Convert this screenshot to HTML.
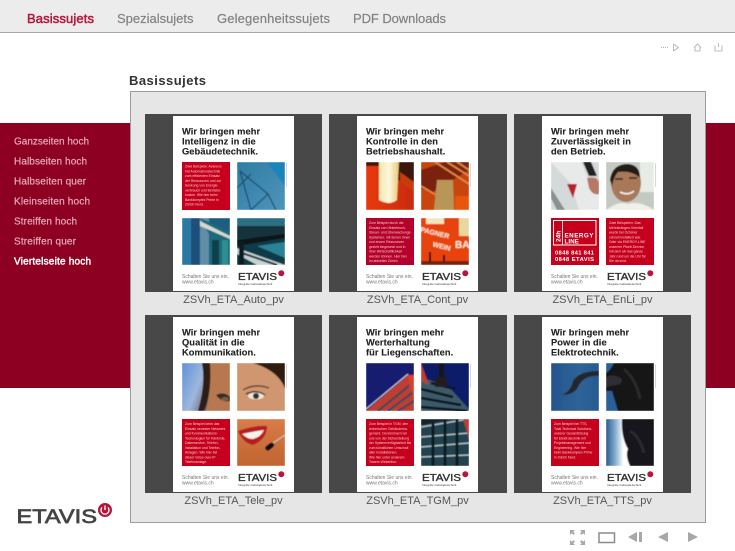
<!DOCTYPE html>
<html><head><meta charset="utf-8"><title>Basissujets</title>
<style>
html,body{margin:0;padding:0;background:#fff;width:735px;height:551px;overflow:hidden}
svg{display:block}
text{font-family:"Liberation Sans",sans-serif}
.h{font-size:9.3px;font-weight:bold;fill:#222;letter-spacing:.08px;stroke:#222;stroke-width:.12}
.r{font-size:3.4px;fill:#f6c8c8}
.f{font-size:5px;fill:#777}
.l{font-size:9.7px;fill:#333;stroke:#333;stroke-width:.35}
.t{font-size:3px;fill:#444}
.c{font-size:11px;fill:#555;text-anchor:middle}
.m{font-size:10px;fill:#e0a4b4;stroke:#e0a4b4;stroke-width:.25}
.n{font-size:13px;fill:#808080;stroke:#808080;stroke-width:.18}
</style></head><body>
<svg width="735" height="551" viewBox="0 0 735 551" xmlns="http://www.w3.org/2000/svg">
<defs>
<filter id="b" x="-5%" y="-5%" width="110%" height="110%"><feGaussianBlur stdDeviation=".45"/></filter>
<linearGradient id="g1" x1="0" y1="0" x2="1" y2="1"><stop offset="0" stop-color="#2f7ca4"/><stop offset="1" stop-color="#4f94ba"/></linearGradient>
<linearGradient id="g2" x1="0" y1="0" x2="1" y2="0"><stop offset="0" stop-color="#e83a10"/><stop offset="1" stop-color="#c82a08"/></linearGradient>
<linearGradient id="g3" x1="0" y1="0" x2="1" y2="0"><stop offset="0" stop-color="#f0e6b0"/><stop offset=".5" stop-color="#fff8dc"/><stop offset="1" stop-color="#e8c878"/></linearGradient>
<linearGradient id="g4" x1="0" y1="0" x2="1" y2=".4"><stop offset="0" stop-color="#5f90d8"/><stop offset=".45" stop-color="#9db8dc"/><stop offset="1" stop-color="#3a2a20"/></linearGradient>
<linearGradient id="g5" x1="0" y1="0" x2="1" y2="0"><stop offset="0" stop-color="#24548c"/><stop offset=".6" stop-color="#2e6498"/><stop offset="1" stop-color="#245a90"/></linearGradient>
<linearGradient id="g6" x1="0" y1="0" x2="1" y2="0"><stop offset="0" stop-color="#2a5a90"/><stop offset=".2" stop-color="#8ab0d0"/><stop offset=".36" stop-color="#fff"/></linearGradient>
<linearGradient id="g7" x1="0" y1="0" x2="0" y2="1"><stop offset="0" stop-color="#d87c48"/><stop offset="1" stop-color="#c06430"/></linearGradient>
</defs>

<!-- header -->
<rect x="0" y="0" width="735" height="32" fill="#ececec"/>
<rect x="0" y="32" width="735" height="1" fill="#a8a8a8"/>
<text x="27" y="23" font-size="13" fill="#b5173d" stroke="#b5173d" stroke-width=".5" textLength="67">Basissujets</text>
<text class="n" x="117" y="23" textLength="76.5">Spezialsujets</text>
<text class="n" x="217" y="23" textLength="113">Gelegenheitssujets</text>
<text class="n" x="353" y="23" textLength="93">PDF Downloads</text>

<!-- top icons -->
<g fill="none" stroke="#a8aeae" stroke-width=".8">
<path d="M661 47.5h1M663 47.5h1M665 47.5h1M667 47.5h1" stroke="#999"/>
<path d="M673.5 44v7M673.5 44l5 3.5-5 3.5"/>
<path d="M694 47.5l3.5-3.5 3.5 3.5M695 47v4h5v-4"/>
<path d="M715 45.5v5.500h7v-5.500M718.500 43v4"/>
</g>

<!-- red band -->
<rect x="0" y="123" width="735" height="265" fill="#8e0022"/>
<text class="m" x="14" y="144.500" textLength="75">Ganzseiten hoch</text>
<text class="m" x="14" y="164.500" textLength="73">Halbseiten hoch</text>
<text class="m" x="14" y="184.500" textLength="72">Halbseiten quer</text>
<text class="m" x="14" y="204.500" textLength="76">Kleinseiten hoch</text>
<text class="m" x="14" y="224.500" textLength="63">Streiffen hoch</text>
<text class="m" x="14" y="244.500" textLength="62">Streiffen quer</text>
<text class="m" x="14" y="264.500" textLength="77" style="fill:#fff;stroke:#fff;stroke-width:.45">Viertelseite hoch</text>

<!-- title and panel -->
<text x="129" y="85" font-size="13" font-weight="bold" fill="#333" textLength="77">Basissujets</text>
<rect x="130.500" y="91.500" width="575" height="431" fill="#e6e6e6" stroke="#9c9c9c"/>

<!-- CARD 1 -->
<g transform="translate(145,114)">
<rect width="177" height="178" fill="#484848"/><rect x="28" y="2" width="121" height="175" fill="#fff"/>
<text class="h" x="37" y="20.500">Wir bringen mehr</text><text class="h" x="37" y="30.500">Intelligenz in die</text><text class="h" x="37" y="40.500">Gebäudetechnik.</text>
<rect x="37" y="48" width="48" height="48" fill="#c6001c"/>
<text class="r"><tspan x="40" y="53.500">Zwei Beispiele: Avanexo</tspan><tspan x="40" y="58.300">hat Automationstechnik</tspan><tspan x="40" y="63">zum effizienten Einsatz</tspan><tspan x="40" y="67.800">der Ressourcen und zur</tspan><tspan x="40" y="72.500">Senkung von Energie-</tspan><tspan x="40" y="77.300">verbrauch und Betriebs-</tspan><tspan x="40" y="82">kosten. Wie hier beim</tspan><tspan x="40" y="86.800">Bankkomplex Prime in</tspan><tspan x="40" y="91.500">Zürich Nord.</tspan></text>
<svg x="92" y="48" width="48" height="48" viewBox="0 0 48 48"><g filter="url(#b)"><rect width="48" height="48" fill="url(#g1)"/><path d="M3 9L31 32 39 48M3 9L14 48M31 32L14 48M0 26L14 12" stroke="#1d4a68" stroke-width="1.200" fill="none"/><path d="M30 0L48 24V0Z" fill="#1d84bb"/></g></svg>
<svg x="37" y="104" width="48" height="47" viewBox="0 0 48 47"><g filter="url(#b)"><rect width="48" height="47" fill="#1f5d80"/><rect x="0" width="9" height="47" fill="#2c78a4"/><rect x="9" width="9" height="47" fill="#1a4f7a"/><rect x="18" width="9" height="47" fill="#5e8ea6"/><path d="M18 0L48 14V47H28V18Z" fill="#1d6a7a"/><path d="M18 3L48 18 48 21 18 8Z" fill="#d8d8d0"/><rect x="30" y="22" width="7" height="25" fill="#0f3f4a"/><rect x="40" y="22" width="6" height="25" fill="#2f8f90"/></g></svg>
<svg x="92" y="104" width="48" height="47" viewBox="0 0 48 47"><g filter="url(#b)"><rect width="48" height="47" fill="#103a46"/><rect width="48" height="20" fill="#17303a"/><path d="M0 0H48V8H0Z" fill="#2a7082"/><path d="M0 22L48 16V20L0 28Z" fill="#0a1418"/><path d="M0 30L48 47H20L0 36Z" fill="#c8d4d4"/><path d="M2 34L40 47" stroke="#153038" stroke-width="2"/><rect x="2" y="24" width="5" height="23" fill="#0a1a20"/><path d="M20 28L48 24V40Z" fill="#2c8296"/></g></svg>
<rect x="141" y="49" width="1" height="24" fill="#d8d8d8"/>
<text class="f" x="37" y="164">Schalten Sie uns ein.</text><text class="f" x="37" y="169.500">www.etavis.ch</text>
<text class="l" x="93" y="166" textLength="39" lengthAdjust="spacingAndGlyphs">ETAVIS</text><circle cx="136.300" cy="159.300" r="3" fill="#b5173d"/><text class="t" x="93" y="171">Integrale Gebäudetechnik</text>
<text class="c" x="88.500" y="189">ZSVh_ETA_Auto_pv</text>
</g>

<!-- CARD 2 -->
<g transform="translate(329,114)">
<rect width="178" height="178" fill="#484848"/><rect x="28" y="2" width="121" height="175" fill="#fff"/>
<text class="h" x="37" y="20.500">Wir bringen mehr</text><text class="h" x="37" y="30.500">Kontrolle in den</text><text class="h" x="37" y="40.500">Betriebshaushalt.</text>
<svg x="37" y="48" width="48" height="48" viewBox="0 0 48 48"><g filter="url(#b)"><rect width="48" height="48" fill="url(#g2)"/><path d="M30 0H48V30L30 16Z" fill="#3a1208"/><path d="M34 10L48 20V30L34 20Z" fill="#c83a10"/><path d="M0 0H14V4H0Z" fill="#401408"/><path d="M13 0H33L31 38Q23 44 13 38Z" fill="url(#g3)"/></g></svg>
<svg x="92" y="48" width="48" height="48" viewBox="0 0 48 48"><g filter="url(#b)"><rect width="48" height="48" fill="#c84410"/><path d="M0 8L24 0H48V8L12 30 0 26Z" fill="#7a2408"/><path d="M14 0L48 22M26 0L48 14M36 0L48 8M0 24L30 42" stroke="#e08a48" stroke-width="1.800" fill="none"/><path d="M13 48L16 18H32L33 48Z" fill="#b89658"/><path d="M34 48H48V34H34Z" fill="#e8540c"/></g></svg>
<rect x="37" y="104" width="48" height="47" fill="#b4002a"/>
<text class="r"><tspan x="40" y="110">Zum Beispiel durch die</tspan><tspan x="40" y="114.800">Einsatz von Hinterleuch-</tspan><tspan x="40" y="119.500">Steuer- und Überwachungs-</tspan><tspan x="40" y="124.300">Systemen, mit denen Innen</tspan><tspan x="40" y="129">und enorm Ressourcen</tspan><tspan x="40" y="133.800">gezielt eingesetzt und in</tspan><tspan x="40" y="138.500">ihrer Wirtschaftlichkeit</tspan><tspan x="40" y="143.300">werden können. Hier hier</tspan><tspan x="40" y="148">im aktuellen Zürich.</tspan></text>
<svg x="92" y="104" width="48" height="47" viewBox="0 0 48 47"><g filter="url(#b)"><rect width="48" height="47" fill="#e8420e"/><rect x="5" y="0" width="18" height="6" fill="#f0e6c0"/><rect x="38" y="0" width="10" height="18" fill="#e8d8a0"/><text transform="rotate(14 1 10)" x="0" y="14" font-size="7" font-weight="bold" fill="#fff2d8">PAGNER</text><text transform="rotate(14 10 25)" x="12" y="28" font-size="7" font-weight="bold" fill="#fff2d8">WEIN</text><text x="34" y="30" font-size="10" font-weight="bold" fill="#fff2d8">BA</text><rect x="0" y="43" width="48" height="4" fill="#7a2208"/><rect x="8" y="34" width="2" height="10" fill="#301008"/><rect x="22" y="37" width="2" height="7" fill="#301008"/></g></svg>
<rect x="141" y="49" width="1" height="24" fill="#d8d8d8"/>
<text class="f" x="37" y="164">Schalten Sie uns ein.</text><text class="f" x="37" y="169.500">www.etavis.ch</text>
<text class="l" x="93" y="166" textLength="39" lengthAdjust="spacingAndGlyphs">ETAVIS</text><circle cx="136.300" cy="159.300" r="3" fill="#b5173d"/><text class="t" x="93" y="171">Integrale Gebäudetechnik</text>
<text class="c" x="88.500" y="189">ZSVh_ETA_Cont_pv</text>
</g>

<!-- CARD 3 -->
<g transform="translate(514,114)">
<rect width="177" height="178" fill="#484848"/><rect x="28" y="2" width="121" height="175" fill="#fff"/>
<text class="h" x="37" y="20.500">Wir bringen mehr</text><text class="h" x="37" y="30.500">Zuverlässigkeit in</text><text class="h" x="37" y="40.500">den Betrieb.</text>
<svg x="37" y="48" width="48" height="48" viewBox="0 0 48 48"><g filter="url(#b)"><rect width="48" height="48" fill="#d4d9d9"/><path d="M0 0H30L40 24H48V48H28L20 22Z" fill="#e8eaea"/><path d="M32 0H40L46 14H38Z" fill="#222"/><path d="M0 26L14 48H6L0 36Z" fill="#8a9090"/><path d="M16 22H26L22 36Z" fill="#b8202c"/><path d="M36 16Q46 14 48 20V32Q42 34 38 26Z" fill="#b87868"/></g></svg>
<svg x="92" y="48" width="48" height="48" viewBox="0 0 48 48"><g filter="url(#b)"><rect width="48" height="48" fill="#c4c9c2"/><rect x="34" y="0" width="14" height="30" fill="#e8ece6"/><ellipse cx="20" cy="21" rx="15" ry="19" fill="#a87858"/><path d="M4 18Q6 2 22 2 34 3 34 16 26 8 12 10 8 14 6 24Z" fill="#201c18"/><path d="M9 17h8M23 16h8" stroke="#2c2018" stroke-width="1.600"/><path d="M14 30q8 4 14-1" stroke="#f4f0e8" stroke-width="1.600" fill="none"/><path d="M0 48Q14 38 22 42 34 38 48 48Z" fill="#f0efe8"/></g></svg>
<rect x="37" y="104" width="48" height="47" fill="#c6001c"/>
<path d="M39.500 106.500H82V131H39.500Z" fill="none" stroke="#fff" stroke-width="1"/>
<rect x="48" y="107" width=".8" height="24" fill="#fff"/>
<text x="46.500" y="128" transform="rotate(-90 46.500 128)" font-size="6.500" font-weight="bold" fill="#fff">24h</text>
<text x="50.500" y="123.300" font-size="6.300" font-weight="bold" fill="#fff" textLength="29">ENERGY</text>
<text x="50.500" y="129.300" font-size="6.300" font-weight="bold" fill="#fff">LINE</text>
<text x="41" y="140.500" font-size="5.800" font-weight="bold" fill="#fff" textLength="39">0848 841 841</text>
<text x="41" y="147" font-size="5.800" font-weight="bold" fill="#fff" textLength="39">0848 ETAVIS</text>
<rect x="92" y="104" width="48" height="47" fill="#c6001c"/>
<text class="r"><tspan x="95" y="110">Zwei Beispielen: Das</tspan><tspan x="95" y="114.800">Mehrsträngen-Virenfall</tspan><tspan x="95" y="119.500">wurde bei Ochsner</tspan><tspan x="95" y="124.300">schnell installiert war.</tspan><tspan x="95" y="129">Oder via ENERGY-LINE</tspan><tspan x="95" y="133.800">unserem Pikett-Service,</tspan><tspan x="95" y="138.500">mit dem wir das ganze</tspan><tspan x="95" y="143.300">Jahr rund um die Uhr für</tspan><tspan x="95" y="148">Sie da sind.</tspan></text>
<rect x="141" y="49" width="1" height="24" fill="#d8d8d8"/>
<text class="f" x="37" y="164">Schalten Sie uns ein.</text><text class="f" x="37" y="169.500">www.etavis.ch</text>
<text class="l" x="93" y="166" textLength="39" lengthAdjust="spacingAndGlyphs">ETAVIS</text><circle cx="136.300" cy="159.300" r="3" fill="#b5173d"/><text class="t" x="93" y="171">Integrale Gebäudetechnik</text>
<text class="c" x="88.500" y="189">ZSVh_ETA_EnLi_pv</text>
</g>

<!-- CARD 4 -->
<g transform="translate(145,315)">
<rect width="177" height="178" fill="#484848"/><rect x="28" y="2" width="121" height="175" fill="#fff"/>
<text class="h" x="37" y="20.500">Wir bringen mehr</text><text class="h" x="37" y="30.500">Qualität in die</text><text class="h" x="37" y="40.500">Kommunikation.</text>
<svg x="37" y="48" width="48" height="48" viewBox="0 0 48 48"><g filter="url(#b)"><rect width="48" height="48" fill="url(#g4)"/><path d="M24 48Q30 24 26 0H48V48Z" fill="#b87850"/><path d="M22 48Q30 30 28 0H20Q24 20 16 48Z" fill="#2e1c14"/><path d="M34 32Q42 28 48 34V38Q40 40 34 32Z" fill="#3a2a20"/><ellipse cx="43" cy="36" rx="4" ry="2" fill="#706048"/></g></svg>
<svg x="92" y="48" width="48" height="48" viewBox="0 0 48 48"><g filter="url(#b)"><rect width="48" height="48" fill="#cf9670"/><path d="M16 0H48V26Q42 8 16 0Z" fill="#2e1a10"/><path d="M6 27Q18 20 32 25" stroke="#5a3826" stroke-width="1.300" fill="none"/><ellipse cx="19" cy="33" rx="8" ry="3.500" fill="#ece6dc"/><circle cx="19" cy="33" r="3" fill="#3a2e24"/><path d="M9 31Q19 26 28 32" stroke="#1c1008" stroke-width="1.300" fill="none"/></g></svg>
<rect x="37" y="104" width="48" height="47" fill="#c6001c"/>
<text class="r"><tspan x="40" y="110">Zum Beispiel beim das</tspan><tspan x="40" y="114.800">Einsatz neuester Netzwerk</tspan><tspan x="40" y="119.500">und Kommunikations-</tspan><tspan x="40" y="124.300">Technologien für Telefonie,</tspan><tspan x="40" y="129">Datenservice, Telefon-</tspan><tspan x="40" y="133.800">installation und Telefon-</tspan><tspan x="40" y="138.500">Anlagen. Wie hier bei</tspan><tspan x="40" y="143.300">dieser Voice-over-IP</tspan><tspan x="40" y="148">Telefonanlage.</tspan></text>
<svg x="92" y="104" width="48" height="47" viewBox="0 0 48 47"><g filter="url(#b)"><rect width="48" height="47" fill="url(#g7)"/><path d="M1 12Q18 6 30 7 30 20 16 26 6 24 1 12Z" fill="#b81c20"/><path d="M5 15Q18 12 27 11 24 18 16 20 10 20 5 15Z" fill="#f6f2e8"/><path d="M30 28L48 16" stroke="#d8d0c0" stroke-width="1"/><rect x="28" y="25" width="10" height="5" rx="2.500" transform="rotate(-38 33 28)" fill="#111"/></g></svg>
<rect x="141" y="49" width="1" height="24" fill="#d8d8d8"/>
<text class="f" x="37" y="164">Schalten Sie uns ein.</text><text class="f" x="37" y="169.500">www.etavis.ch</text>
<text class="l" x="93" y="166" textLength="39" lengthAdjust="spacingAndGlyphs">ETAVIS</text><circle cx="136.300" cy="159.300" r="3" fill="#b5173d"/><text class="t" x="93" y="171">Integrale Gebäudetechnik</text>
<text class="c" x="88.500" y="189">ZSVh_ETA_Tele_pv</text>
</g>

<!-- CARD 5 -->
<g transform="translate(329,315)">
<rect width="178" height="178" fill="#484848"/><rect x="28" y="2" width="121" height="175" fill="#fff"/>
<text class="h" x="37" y="20.500">Wir bringen mehr</text><text class="h" x="37" y="30.500">Werterhaltung</text><text class="h" x="37" y="40.500">für Liegenschaften.</text>
<svg x="37" y="48" width="48" height="48" viewBox="0 0 48 48"><g filter="url(#b)"><rect width="48" height="48" fill="#131c70"/><path d="M0 48L42 12H48V48Z" fill="#c03c30"/><path d="M0 46L42 11" stroke="#d8e0f0" stroke-width=".9"/><path d="M12 48L44 22M22 48L46 30M32 48L48 38" stroke="#3a4a5a" stroke-width="2.200"/><path d="M42 12H48V30L44 26Z" fill="#d84030"/></g></svg>
<svg x="92" y="48" width="48" height="48" viewBox="0 0 48 48"><g filter="url(#b)"><rect width="48" height="48" fill="#101a68"/><path d="M0 48V14L28 24 48 46V48Z" fill="#3c5a68"/><path d="M0 0V18L8 22Z" fill="#c03c30"/><path d="M0 26L32 34M0 35L40 42M0 44L46 48M10 20L34 26" stroke="#0c1820" stroke-width="2.500"/><rect x="18" y="0" width="5" height="24" fill="#181818"/><path d="M14 14H26V24H14Z" fill="#241c20"/></g></svg>
<rect x="37" y="104" width="48" height="47" fill="#c6001c"/>
<text class="r"><tspan x="40" y="110">Zum Beispiel in TGM, den</tspan><tspan x="40" y="114.800">technischen Gebäudema-</tspan><tspan x="40" y="119.500">gement. Da kümmern wir</tspan><tspan x="40" y="124.300">uns von der Sicherstellung</tspan><tspan x="40" y="129">der Systemverfügbarkeit bis</tspan><tspan x="40" y="133.800">zum künstlichen Umschalt</tspan><tspan x="40" y="138.500">aller Installationen.</tspan><tspan x="40" y="143.300">Wie hier unter anderem</tspan><tspan x="40" y="148">Towers Winterthur.</tspan></text>
<svg x="92" y="104" width="48" height="47" viewBox="0 0 48 47"><g filter="url(#b)"><rect width="48" height="47" fill="#24424f"/><path d="M0 8L48 0M0 18L48 14M0 28L48 24M0 38L48 36" stroke="#c0ccd0" stroke-width="1.300"/><path d="M12 0V47M24 0V47M36 0V47" stroke="#0c1a22" stroke-width="3"/><path d="M0 0H30L0 6Z" fill="#14222a"/><path d="M42 0H48V20Z" fill="#c03c30"/></g></svg>
<rect x="141" y="49" width="1" height="24" fill="#d8d8d8"/>
<text class="f" x="37" y="164">Schalten Sie uns ein.</text><text class="f" x="37" y="169.500">www.etavis.ch</text>
<text class="l" x="93" y="166" textLength="39" lengthAdjust="spacingAndGlyphs">ETAVIS</text><circle cx="136.300" cy="159.300" r="3" fill="#b5173d"/><text class="t" x="93" y="171">Integrale Gebäudetechnik</text>
<text class="c" x="88.500" y="189">ZSVh_ETA_TGM_pv</text>
</g>

<!-- CARD 6 -->
<g transform="translate(514,315)">
<rect width="177" height="178" fill="#484848"/><rect x="28" y="2" width="121" height="175" fill="#fff"/>
<text class="h" x="37" y="20.500">Wir bringen mehr</text><text class="h" x="37" y="30.500">Power in die</text><text class="h" x="37" y="40.500">Elektrotechnik.</text>
<svg x="37" y="48" width="48" height="48" viewBox="0 0 48 48"><g filter="url(#b)"><rect width="48" height="48" fill="url(#g5)"/><path d="M11 32Q20 28 22 18 28 8 48 8V13Q34 12 28 22 24 32 11 32Z" fill="#26262c"/></g></svg>
<svg x="92" y="48" width="48" height="48" viewBox="0 0 48 48"><g filter="url(#b)"><rect width="48" height="48" fill="#151518"/><path d="M0 0H8Q4 8 0 10ZM0 28H6L12 48H0Z" fill="#2a6098"/><path d="M0 14Q8 10 16 16 16 22 10 22L0 24Z" fill="#2e2e34"/><path d="M18 6Q30 16 34 36" stroke="#2a2a2e" stroke-width="3" fill="none"/></g></svg>
<rect x="37" y="104" width="48" height="47" fill="#c6001c"/>
<text class="r"><tspan x="40" y="110">Zum Beispiel bei TTS,</tspan><tspan x="40" y="114.800">Total Technical Solutions,</tspan><tspan x="40" y="119.500">unserer Gesamtlösung</tspan><tspan x="40" y="124.300">für Elektrotechnik mit</tspan><tspan x="40" y="129">Projektmanagement und</tspan><tspan x="40" y="133.800">Engineering. Wie hier</tspan><tspan x="40" y="138.500">beim Bankkomplex Prime</tspan><tspan x="40" y="143.300">in Zürich Nord.</tspan></text>
<svg x="92" y="104" width="48" height="47" viewBox="0 0 48 47"><g filter="url(#b)"><rect width="48" height="47" fill="url(#g6)"/><path d="M16 0H48V47H24Q19 36 22 30 15 18 16 0Z" fill="#17171a"/><path d="M24 12Q34 18 38 34" stroke="#2a2a2e" stroke-width="3" fill="none"/></g></svg>
<rect x="141" y="49" width="1" height="24" fill="#d8d8d8"/>
<text class="f" x="37" y="164">Schalten Sie uns ein.</text><text class="f" x="37" y="169.500">www.etavis.ch</text>
<text class="l" x="93" y="166" textLength="39" lengthAdjust="spacingAndGlyphs">ETAVIS</text><circle cx="136.300" cy="159.300" r="3" fill="#b5173d"/><text class="t" x="93" y="171">Integrale Gebäudetechnik</text>
<text class="c" x="88.500" y="189">ZSVh_ETA_TTS_pv</text>
</g>

<!-- main logo -->
<text x="16.500" y="523" font-size="19.500" fill="#444" stroke="#444" stroke-width=".7" textLength="80.500" lengthAdjust="spacingAndGlyphs">ETAVIS</text>
<circle cx="105" cy="510" r="7" fill="#b5173d"/>
<path d="M102 507.500a4 4 0 1 0 6 0M105 505.500v4.500" fill="none" stroke="#fff" stroke-width="1.300"/>

<!-- bottom icons -->
<g fill="#a8a8a8">
<path d="M570 530h5l-1.700 1.700 1.700 1.700-1.500 1.500-1.700-1.700-1.800 1.800zM585 530h-5l1.700 1.700-1.700 1.700 1.500 1.500 1.700-1.700 1.800 1.800zM570 545h5l-1.700-1.700 1.700-1.700-1.500-1.500-1.700 1.700-1.800-1.800zM585 545h-5l1.700-1.700-1.700-1.700 1.500-1.500 1.700 1.700 1.800-1.800z"/>
<path d="M628 537l9-5v10zM639 532h3v10h-3zM658 537l10-5v10zM698 537l-10-5v10z"/>
</g>
<rect x="599" y="533" width="15.500" height="9.500" fill="none" stroke="#8c8c8c" stroke-width="1.500"/>
</svg>
</body></html>
